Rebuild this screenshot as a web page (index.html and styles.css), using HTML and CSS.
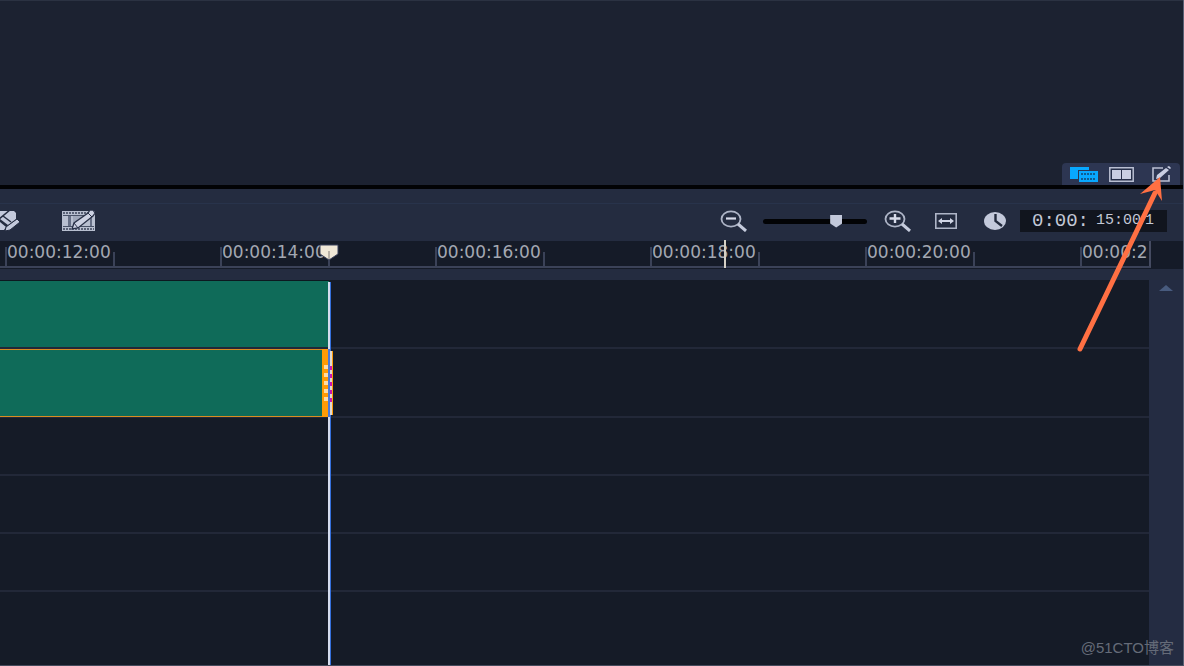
FILE: index.html
```html
<!DOCTYPE html>
<html lang="zh">
<head>
<meta charset="utf-8">
<title>Timeline</title>
<link rel="stylesheet" href="styles.css">
</head>
<body>
<div class="editor">
  <section class="preview">
    <div class="views">
      <button class="view" aria-label="Timeline view">
        <svg width="28" height="17" viewBox="0 0 28 17"><path fill="#08a8ff" d="M0 1h19v3H8v9H0z"/><path fill="#08a8ff" d="M9 5h19v11H9z"/><path stroke="#12446d" stroke-width="1.4" stroke-dasharray="2 1" d="M11 8h15M11 13h15"/></svg>
      </button>
      <button class="view" aria-label="Storyboard view">
        <svg width="25" height="15" viewBox="0 0 25 15"><path fill="#262f49" stroke="#b9bfd2" stroke-width="1.5" d="M.8.8h23.4v13.4H.8z"/><path fill="#c9cee2" d="M3 3h9v9H3zM13 3h9v9h-9z"/></svg>
      </button>
      <button class="view view-edit" aria-label="Edit timeline">
        <svg width="19" height="17" viewBox="0 0 19 17"><path fill="none" stroke="#b9bfd2" stroke-width="1.6" d="M11 2H1v13h16V9"/><path fill="#c9cee2" d="M4 13l1-4 9-7 3 2-9 8zM15 1l2-1 2 2-1 1z"/></svg>
      </button>
    </div>
  </section>

  <div class="toolbar">
    <button class="tool tool-cut" aria-label="Tools">
      <svg width="20" height="22" viewBox="0 0 20 22"><path fill="#c3c9db" d="M0 1h14l2 2v6l-8 6-8-6z"/><path stroke="#242c40" stroke-width="1.500" d="M-1 9L10 0M3 6l8 6"/><path fill="#c3c9db" d="M0 12l6 5-2 3H0z"/><path fill="#c3c9db" stroke="#242c40" d="M5 21l1-4L17 9l3 3L10 20z"/></svg>
    </button>
    <button class="tool tool-film" aria-label="Film editing">
      <svg width="33" height="22" viewBox="0 0 33 22"><path fill="#b8bfd0" d="M0 1h33v20H0z"/><path stroke="#3b445a" stroke-width="1.400" stroke-dasharray="2 1" d="M1 3h31M1 19h31"/><path fill="#495268" d="M1 5h31v1H1zM1 16h31v1H1z"/><path fill="#b8bfd0" d="M1 6h30v10H1z"/><path fill="#666f86" d="M6 6h3v10H6zM28 6h2v10h-2z"/><path fill="#9fa7ba" d="M11 6h12L11 15z"/><path fill="#cdd2e3" stroke="#293148" stroke-width="1.300" d="M10 19l2-6L26 3l2-3h3l2 3-2 3-15 12z"/><path stroke="#293148" d="M12 13l4 5M26 3l4 4"/></svg>
    </button>
    <div class="zoom">
      <button class="tool" aria-label="Zoom out">
        <svg width="28" height="22" viewBox="0 0 28 22"><ellipse cx="11" cy="9" rx="9.500" ry="7.600" fill="none" stroke="#aeb5c7" stroke-width="1.800"/><path stroke="#c5cbdc" stroke-width="3" d="M18 14l8 7"/><path stroke="#d7dbea" stroke-width="2.200" d="M6 8.500h10"/></svg>
      </button>
      <input class="slider" type="range" min="0" max="100" value="73" aria-label="Zoom">
      <button class="tool" aria-label="Zoom in">
        <svg width="28" height="22" viewBox="0 0 28 22"><ellipse cx="11" cy="9" rx="9.500" ry="7.600" fill="none" stroke="#aeb5c7" stroke-width="1.800"/><path stroke="#c5cbdc" stroke-width="3" d="M18 14l8 7"/><path stroke="#d7dbea" stroke-width="2.400" d="M5.500 8.500h11M11 4v9"/></svg>
      </button>
    </div>
    <button class="tool tool-fit" aria-label="Fit project">
      <svg width="22" height="16" viewBox="0 0 22 16"><path fill="none" stroke="#aeb5c7" stroke-width="1.600" d="M.8.8h20.400v14.400H.8z"/><path fill="#d0d5e5" d="M3 8l4-3v2h8V5l4 3-4 3V9H7v2z"/></svg>
    </button>
    <button class="tool tool-clock" aria-label="Project duration">
      <svg width="22" height="18" viewBox="0 0 22 18"><ellipse cx="11" cy="9" rx="11" ry="9" fill="#c3c9db"/><path fill="none" stroke="#222a3d" stroke-width="2.400" d="M11.500 2v7l6.500 5"/></svg>
    </button>
    <div class="timecode"><span>0:00:</span><span class="frames">15:00</span><span class="last-frame">1</span></div>
  </div>

  <div class="ruler">
    <div class="scale">
      <div class="major">00:00:12:00</div><div class="minor"></div>
      <div class="major">00:00:14:00</div><div class="minor"></div>
      <div class="major">00:00:16:00</div><div class="minor"></div>
      <div class="major">00:00:18:00</div><div class="minor"></div>
      <div class="major">00:00:20:00</div><div class="minor"></div>
      <div class="major last">00:00:2</div>
    </div>
    <svg class="marker" width="20" height="17" viewBox="0 0 20 17"><path fill="#f0e8d7" stroke="#39405a" d="M1 1h18v9l-9 6-9-6z"/><path stroke="#b8b0a6" stroke-width="2" d="M10 7v8"/></svg>
    <div class="cursor"></div>
  </div>

  <div class="timeline">
    <div class="lanes">
      <div class="lane tall"><div class="clip"></div></div>
      <div class="lane tall"><div class="clip selected">
        <svg class="grip" width="11" height="68" viewBox="0 0 11 68"><path fill="#ff9b05" d="M0 0h6v68H0zM9 2h2v64H9z"/><path fill="#ffdda3" d="M2 16h4v4H2zM2 24h4v4H2zM2 32h4v4H2zM2 40h4v4H2zM2 48h4v4H2z"/><path fill="#4a78d8" d="M6 0h2v68H6z"/><path fill="#dfd9d2" d="M8 2h2v64H8z"/><path fill="#c815b6" d="M8 17h2v4H8zM8 25h2v4H8zM8 33h2v4H8zM8 41h2v4H8zM8 49h2v4H8z"/></svg>
      </div></div>
      <div class="lane"></div>
      <div class="lane"></div>
      <div class="lane"></div>
      <div class="lane rest"></div>
      <div class="playhead"></div>
    </div>
    <div class="scroller">
      <button class="up" aria-label="Scroll up"><svg width="14" height="6" viewBox="0 0 14 6"><path fill="#485b7e" d="M7 0l7 6H0z"/></svg></button>
    </div>
  </div>

  <svg class="arrow" width="88" height="178" viewBox="0 0 88 178"><path stroke="#ff7043" stroke-width="5" stroke-linecap="round" d="M4 172L79 16"/><path fill="#ff7043" d="M84 0l2 24-7-11-15 4z"/></svg>
  <div class="watermark">@51CTO博客</div>
</div>
</body>
</html>
```
FILE: styles.css
```css
* { box-sizing: border-box; }

body {
  margin: 0;
  background: #151b27;
  font-family: "DejaVu Sans", sans-serif;
}

button {
  display: flex;
  padding: 0;
  border: 0;
  background: none;
}

svg { display: block; fill: none; }

.editor {
  position: relative;
  display: flex;
  flex-direction: column;
  min-height: 100vh;
  overflow: hidden;
  border-right: 1px solid #596174;
  border-bottom: 1px solid #454b5c;
}

.preview {
  display: flex;
  justify-content: flex-end;
  align-items: flex-end;
  height: 189px;
  padding-right: 3px;
  border-top: 1px solid #2b3242;
  border-bottom: 4px solid #020305;
  background: #1c2231;
}

.views {
  display: flex;
  align-items: center;
  gap: 11px;
  height: 22px;
  padding: 0 9px 0 8px;
  border-radius: 4px 4px 0 0;
  background: #2d3652;
}

.view-edit { margin-left: 7px; }

.toolbar {
  display: flex;
  align-items: center;
  height: 52px;
  padding: 12px 16px 0 0;
  background: linear-gradient(#242c40 14px, #28334b 14px, #28334b 15px, #242c40 15px);
}

.tool-film { margin-left: 42px; }

.zoom {
  display: flex;
  align-items: center;
  gap: 15px;
  margin-left: auto;
}

.slider {
  width: 104px;
  height: 16px;
  margin: 0 2px 0 0;
  appearance: none;
  background: none;
}

.slider::-webkit-slider-runnable-track {
  height: 5px;
  border-radius: 3px;
  background: #020305;
}

.slider::-webkit-slider-thumb {
  width: 12px;
  height: 13px;
  margin-top: -4px;
  appearance: none;
  background: #c3c9db;
  clip-path: polygon(0 0, 100% 0, 100% 70%, 50% 100%, 0 70%);
}

.tool-fit { margin-left: 23px; }
.tool-clock { margin-left: 27px; }

.timecode {
  display: flex;
  align-items: center;
  width: 147px;
  height: 22px;
  margin-left: 14px;
  padding-left: 12px;
  background: #11151e;
  color: #c3c8d6;
  font: 19px/22px "Liberation Mono", monospace;
}

.frames,
.last-frame { font-size: 15px; }

.frames { margin-left: 7px; }
.last-frame { margin-left: 4px; }

.ruler {
  position: relative;
  height: 28px;
  padding-right: 32px;
  background: #151b28;
}

.scale {
  display: flex;
  align-items: flex-end;
  height: 27px;
  padding-left: 5px;
  border-right: 2px solid #454b61;
  border-bottom: 2px solid #3b4258;
}

.major {
  flex: none;
  width: 108px;
  height: 19px;
  border-left: 2px solid #3b4258;
  color: #a3a8b2;
  font-size: 17px;
  line-height: 10px;
  white-space: nowrap;
}

.minor {
  flex: none;
  width: 107px;
  height: 14px;
  border-left: 2px solid #3b4258;
}

.last {
  flex: 1;
  min-width: 0;
}

.marker {
  position: absolute;
  left: 319px;
  top: 3px;
}

.cursor {
  position: absolute;
  left: 724px;
  top: -1px;
  width: 2px;
  height: 28px;
  background: #d5d0c5;
}

.timeline {
  display: flex;
  flex: 1;
  border-top: 11px solid #242c40;
}

.lanes {
  position: relative;
  display: flex;
  flex: 1;
  flex-direction: column;
}

.lane {
  height: 58px;
  border-bottom: 2px solid #222838;
  background: #151b27;
}

.tall { height: 69px; }

.lane.rest {
  flex: 1;
  border: 0;
}

.clip {
  width: 329px;
  height: 67px;
  border-top: 1px solid #0c1820;
  background: #0f6b59;
}

.selected {
  position: relative;
  z-index: 1;
  height: 68px;
  border: solid #d98d20;
  border-width: 1px 0;
}

.grip {
  position: absolute;
  right: -4px;
  top: -1px;
}

.playhead {
  position: absolute;
  left: 328px;
  top: 2px;
  bottom: 0;
  width: 3px;
  border-left: 2px solid #d5dcee;
  background: #3570dc;
}

.scroller {
  display: flex;
  justify-content: center;
  align-items: flex-start;
  width: 34px;
  padding-top: 5px;
  background: #242c42;
}

.arrow {
  position: absolute;
  right: 19px;
  top: 177px;
  pointer-events: none;
}

.watermark {
  position: absolute;
  right: 9px;
  bottom: 7px;
  color: #656b78;
  font: 15px/20px "Liberation Sans", "Noto Sans CJK SC", sans-serif;
}
```
